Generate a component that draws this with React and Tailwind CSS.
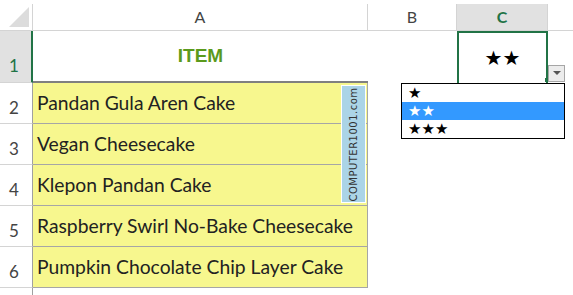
const items = [
  "Pandan Gula Aren Cake",
  "Vegan Cheesecake",
  "Klepon Pandan Cake",
  "Raspberry Swirl No-Bake Cheesecake",
  "Pumpkin Chocolate Chip Layer Cake",
];

const App = () => {
  return (
    <div className="relative w-[573px] h-[295px] overflow-hidden bg-white font-['Lato',sans-serif] text-[#444]">
      <div className="h-[4px]" />

      {/* column headers */}
      <div className="flex h-[27px] border-b border-[#d4d4d4] text-[16px]">
        <div className="relative w-[33px] border-r border-[#d4d4d4]">
          <svg className="absolute left-0 top-0" width="32" height="26">
            <polygon points="9,23 29,3 29,23" fill="#dcdcdc" />
          </svg>
        </div>
        <div className="w-[335px] border-r border-[#d4d4d4] flex items-center justify-center">A</div>
        <div className="w-[89px] border-r border-[#d4d4d4] flex items-center justify-center">B</div>
        <div className="w-[91px] border-r border-[#d4d4d4] bg-[#e1e1e1] flex items-center justify-center font-bold text-[#217346]">
          C
        </div>
        <div className="flex-1" />
      </div>

      {/* row 1 */}
      <div className="flex h-[52px]">
        <div className="w-[33px] bg-[#e1e1e1] border-r-2 border-b border-r-[#217346] border-b-[#d4d4d4] flex items-end pl-[9px] pb-[4px] text-[17px] text-[#217346]">
          1
        </div>
        <div className="w-[335px] border-b-2 border-[#808080] flex items-center justify-center font-['Liberation_Sans',sans-serif] font-bold text-[19px] text-[#5b9a1c]">
          ITEM
        </div>
        <div className="w-[89px]" />
        <div className="w-[91px] border-2 border-b-0 border-[#217346] flex items-center justify-center font-['DejaVu_Sans',sans-serif] text-[20px] text-black">
          ★★
        </div>
        <div className="flex-1" />
      </div>

      {/* rows 2-6 */}
      {items.map((item, i) => (
        <div key={item} className="flex h-[41px]">
          <div className="w-[33px] border-r border-b border-r-[#a0a0a0] border-b-[#d4d4d4] flex items-end pl-[9px] pb-[3px] text-[17px]">
            {i + 2}
          </div>
          <div className="w-[335px] bg-[#f7f78e] border-r border-b border-[#a6a6a6] flex items-center pl-[4px] text-[19.3px] text-[#222]">
            {item}
          </div>
          <div className="flex-1" />
        </div>
      ))}

      {/* row 7 */}
      <div className="flex h-[20px]">
        <div className="w-[33px] border-r border-[#a0a0a0]" />
      </div>

      {/* watermark */}
      <div className="absolute left-[341px] top-[85px] w-[25px] h-[118px] bg-[#abd4e7] border border-white flex items-center justify-center">
        <span className="-rotate-90 whitespace-nowrap font-['DejaVu_Sans',sans-serif] text-[10px] tracking-[0.5px] text-[#333]">
          COMPUTER1001.com
        </span>
      </div>

      {/* fill handle */}
      <div className="absolute left-[545px] top-[78px] w-[4px] h-[4px] bg-[#217346]" />

      {/* dropdown button */}
      <div className="absolute left-[548px] top-[65px] w-[17px] h-[17px] bg-[#ececec] border border-[#a6a6a6] flex items-center justify-center">
        <svg width="8" height="5">
          <polygon points="0,0 8,0 4,4" fill="#555" />
        </svg>
      </div>

      {/* dropdown list */}
      <div className="absolute left-[401px] top-[83px] w-[164px] h-[56px] border border-black bg-white font-['DejaVu_Sans',sans-serif] text-[15px] text-black leading-[18px]">
        <div className="h-[18px] pl-[6px]">★</div>
        <div className="h-[18px] pl-[6px] bg-[#3399ff] text-white">★★</div>
        <div className="h-[18px] pl-[6px]">★★★</div>
      </div>
    </div>
  );
};

export default App;
